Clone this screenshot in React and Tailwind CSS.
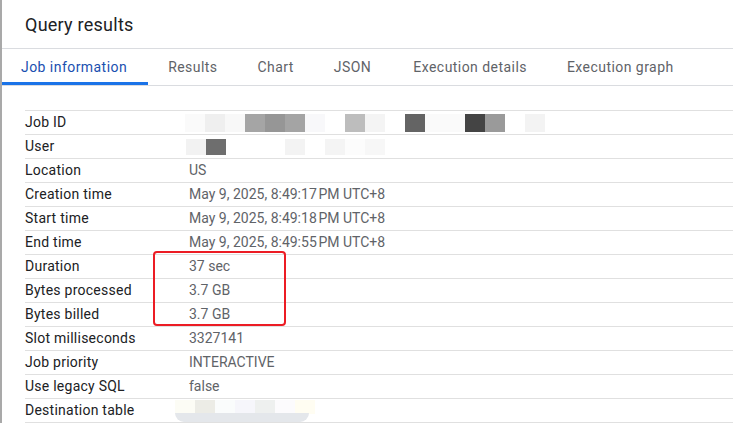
import React from "react";

const tabs = ["Job information", "Results", "Chart", "JSON", "Execution details", "Execution graph"];

// redacted blocks: [left offset from value column, colour]
const jobIdBlocks = [
  [-4, "#fafafa"], [16, "#efefef"], [36, "#f8f8f8"], [56, "#a5a5a5"], [76, "#969696"],
  [96, "#a4a4a4"], [116, "#f8f8fa"], [156, "#bdbdbd"], [176, "#f4f4f4"], [216, "#646464"],
  [236, "#fafafa"], [256, "#fafafa"], [276, "#444444"], [296, "#9a9a9a"], [336, "#f3f3f3"],
];
const userBlocks = [
  [-3, "#f2f2f2"], [17, "#6e6e6e"], [96, "#f3f3f3"], [136, "#f4f4f4"], [156, "#fcfcfc"], [176, "#f7f7f7"],
];
const destBlocks = [
  [-14, "#fcfcf5"], [6, "#ecece6"], [26, "#fafcfc"], [46, "#f6f6fb"], [66, "#eef0ef"], [86, "#fcfbfd"], [106, "#fffdf2"],
];

function Blocks({ items, h = "h-[18px]" }) {
  return (
    <div className={`relative ${h} w-full`}>
      {items.map(([x, c], i) => (
        <span key={i} className={`absolute top-0 ${h} w-[20px]`} style={{ left: x, background: c }} />
      ))}
    </div>
  );
}

const rows = [
  ["Job ID", <Blocks items={jobIdBlocks} />],
  ["User", <Blocks items={userBlocks} h="h-[16px]" />],
  ["Location", "US"],
  ["Creation time", "May 9, 2025, 8:49:17\u202FPM UTC+8"],
  ["Start time", "May 9, 2025, 8:49:18\u202FPM UTC+8"],
  ["End time", "May 9, 2025, 8:49:55\u202FPM UTC+8"],
  ["Duration", "37 sec"],
  ["Bytes processed", "3.7 GB"],
  ["Bytes billed", "3.7 GB"],
  ["Slot milliseconds", "3327141"],
  ["Job priority", "INTERACTIVE"],
  ["Use legacy SQL", "false"],
  [
    "Destination table",
    <div className="relative h-[22px] w-full">
      <Blocks items={destBlocks} h="h-[14px]" />
      <span className="absolute left-[-14px] top-[13px] h-[9px] w-[134px] rounded-b-full bg-[#e4e7eb]" />
    </div>,
  ],
];

export default function App() {
  return (
    <div
      className="relative h-[423px] w-[733px] overflow-hidden border-l-2 border-[#a9a9a9] bg-white"
      style={{ fontFamily: "Roboto, 'Liberation Sans', sans-serif" }}
    >
      {/* Header */}
      <div className="flex h-[49px] items-center border-b border-[#dadce0] pl-[23px]">
        <h1 className="text-[18px] tracking-[0.25px] text-[#202124]">Query results</h1>
      </div>

      {/* Tabs */}
      <div className="flex h-[37px] border-b border-[#dadce0]">
        {tabs.map((t, i) => (
          <div
            key={t}
            className={`flex items-center text-[14px] tracking-[0.45px] ${
              i === 0
                ? "border-b-[3px] border-[#1a73e8] pl-[19px] pr-[21px] pt-[3px] text-[#1a4fb0]"
                : "px-[20px] text-[#5f6368]"
            } ${i === 4 ? "pl-[22px]" : ""}`}
          >
            {t}
          </div>
        ))}
      </div>

      {/* Details table */}
      <div className="ml-[23px] mt-[24px] border-t border-[#e0e0e0]">
        {rows.map(([label, value]) => (
          <div key={label} className="flex h-[24px] items-center border-b border-[#e0e0e0] text-[14px]">
            <div className="w-[164px] shrink-0 tracking-[0.25px] text-[#202124]">{label}</div>
            <div className="flex-1 text-[#5f6368]">{value}</div>
          </div>
        ))}
      </div>

      {/* Red annotation box */}
      <div className="absolute left-[151px] top-[251px] h-[75px] w-[133px] rounded-[4px] border-2 border-[#ec1c24]" />
    </div>
  );
}
